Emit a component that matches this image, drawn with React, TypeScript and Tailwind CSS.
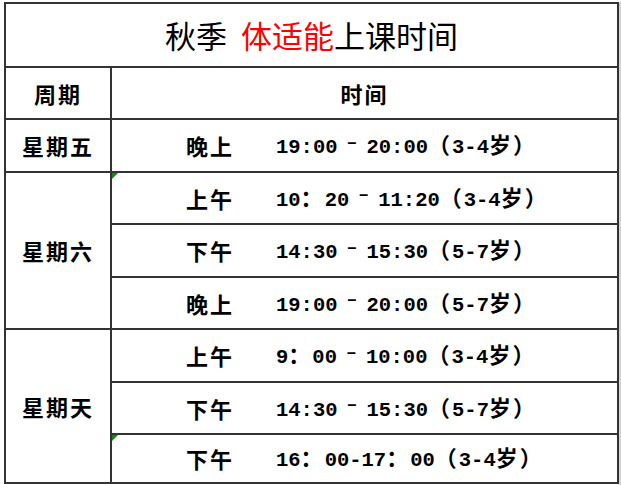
import React from "react";

const M = ({ children }: { children: React.ReactNode }) => (
  <span className="font-['Liberation_Mono',monospace] text-[20.5px] font-bold tracking-normal">{children}</span>
);
const C = ({ children }: { children: React.ReactNode }) => (
  <span className="font-['Noto_Sans_CJK_SC',sans-serif] text-[22px] font-bold tracking-[2px]">{children}</span>
);
const D = () => (
  <span className="inline-block w-[29px] text-center font-['Liberation_Mono',monospace] text-[18px] font-bold align-[0.3em] leading-none">–</span>
);

type Row = { label: string; time: React.ReactNode; mark?: boolean };

const rows: Row[] = [
  { label: "晚上", time: (<><M>19:00</M><D /><M>20:00</M><C>（</C><M>3-4</M><C>岁）</C></>) },
  { label: "上午", mark: true, time: (<><M>10</M><C>：</C><M>20</M><D /><M>11:20</M><C>（</C><M>3-4</M><C>岁）</C></>) },
  { label: "下午", time: (<><M>14:30</M><D /><M>15:30</M><C>（</C><M>5-7</M><C>岁）</C></>) },
  { label: "晚上", time: (<><M>19:00</M><D /><M>20:00</M><C>（</C><M>5-7</M><C>岁）</C></>) },
  { label: "上午", time: (<><M>9</M><C>：</C><M>00</M><D /><M>10:00</M><C>（</C><M>3-4</M><C>岁）</C></>) },
  { label: "下午", time: (<><M>14:30</M><D /><M>15:30</M><C>（</C><M>5-7</M><C>岁）</C></>) },
  { label: "下午", mark: true, time: (<><M>16</M><C>：</C><M>00-17</M><C>：</C><M>00</M><C>（</C><M>3-4</M><C>岁）</C></>) },
];

const TimeCell = ({ r }: { r: Row }) => (
  <div className="relative flex items-center bg-white pl-[74px] text-black whitespace-nowrap">
    {r.mark && (
      <span className="absolute left-0 top-0 h-0 w-0 border-t-[6px] border-r-[6px] border-t-[#128a12] border-r-transparent" />
    )}
    <span className="w-[90px] font-['Noto_Sans_CJK_SC',sans-serif] text-[22px] font-bold tracking-[2px]">{r.label}</span>
    <div className="leading-[30px]">{r.time}</div>
  </div>
);

const DayCell = ({ text, span }: { text: string; span?: boolean }) => (
  <div
    className={
      span
        ? "row-span-3 flex items-center justify-center bg-white font-['Noto_Sans_CJK_SC',sans-serif] text-[22px] font-bold tracking-[2px] text-black"
        : "flex items-center justify-center bg-white font-['Noto_Sans_CJK_SC',sans-serif] text-[22px] font-bold tracking-[2px] text-black"
    }
  >
    {text}
  </div>
);

export default function App() {
  return (
    <div className="flex h-[485px] w-[621px] bg-white pl-[4px] pt-[2px]">
      <div className="grid h-[482px] w-[615px] grid-cols-[104px_505px] grid-rows-[62px_50px_51px_50px_51px_50px_51px_50px_47px] gap-[2px] bg-[#333333] p-[2px]">
        <div className="col-span-2 flex items-center justify-center bg-white font-['Noto_Sans_CJK_SC',sans-serif] text-[31px] font-normal text-black">
          <span>秋季</span>
          <span className="ml-[14px] text-[#ff0000]">体适能</span>
          <span>上课时间</span>
        </div>
        <DayCell text="周期" />
        <div className="flex items-center justify-center bg-white font-['Noto_Sans_CJK_SC',sans-serif] text-[22px] font-bold tracking-[2px] text-black">时间</div>
        <DayCell text="星期五" />
        <TimeCell r={rows[0]} />
        <DayCell text="星期六" span />
        <TimeCell r={rows[1]} />
        <TimeCell r={rows[2]} />
        <TimeCell r={rows[3]} />
        <DayCell text="星期天" span />
        <TimeCell r={rows[4]} />
        <TimeCell r={rows[5]} />
        <TimeCell r={rows[6]} />
      </div>
      <div className="h-full w-[2px] bg-[#d4d4d4]" />
    </div>
  );
}
